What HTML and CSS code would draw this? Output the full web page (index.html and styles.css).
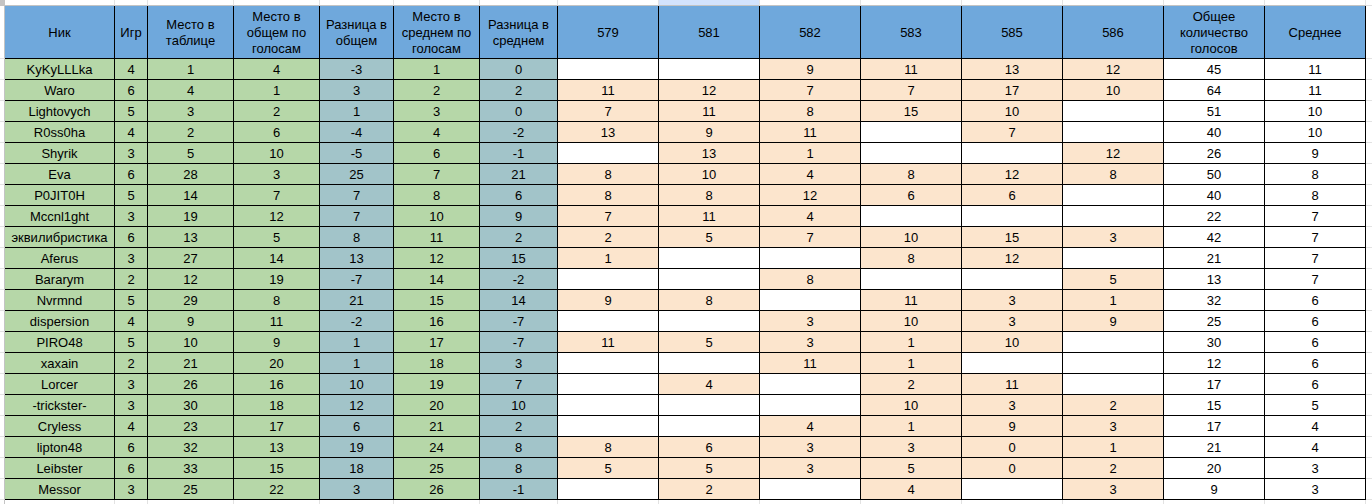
FILE: index.html
```html
<!DOCTYPE html>
<html lang="ru">
<head>
<meta charset="utf-8">
<title>Таблица</title>
<link rel="stylesheet" href="styles.css">
</head>
<body>
<div class="sheet">
  <div class="row top">
    <div class="corner"></div><div></div><div></div><div></div><div></div><div></div><div></div><div></div><div></div><div class="sel"></div><div></div><div></div><div></div><div></div><div></div><div></div><div class="tr"></div>
  </div>
  <div class="row head">
    <div class="gut"></div>
    <div class="cell">Ник</div>
    <div class="cell">Игр</div>
    <div class="cell">Место в<br>таблице</div>
    <div class="cell">Место в<br>общем по<br>голосам</div>
    <div class="cell">Разница в<br>общем</div>
    <div class="cell">Место в<br>среднем по<br>голосам</div>
    <div class="cell">Разница в<br>среднем</div>
    <div class="cell">579</div>
    <div class="cell">581</div>
    <div class="cell">582</div>
    <div class="cell">583</div>
    <div class="cell">585</div>
    <div class="cell">586</div>
    <div class="cell">Общее<br>количество<br>голосов</div>
    <div class="cell">Среднее</div>
    <div class="gutr"></div>
  </div>

  <div class="row"><div class="gut"></div><div class="cell n">KyKyLLLka</div><div class="cell n">4</div><div class="cell n">1</div><div class="cell n">4</div><div class="cell d">-3</div><div class="cell n">1</div><div class="cell d">0</div><div class="cell e"></div><div class="cell e"></div><div class="cell s">9</div><div class="cell s">11</div><div class="cell s">13</div><div class="cell s">12</div><div class="cell e">45</div><div class="cell e">11</div><div class="gutr"></div></div>
  <div class="row"><div class="gut"></div><div class="cell n">Waro</div><div class="cell n">6</div><div class="cell n">4</div><div class="cell n">1</div><div class="cell d">3</div><div class="cell n">2</div><div class="cell d">2</div><div class="cell s">11</div><div class="cell s">12</div><div class="cell s">7</div><div class="cell s">7</div><div class="cell s">17</div><div class="cell s">10</div><div class="cell e">64</div><div class="cell e">11</div><div class="gutr"></div></div>
  <div class="row"><div class="gut"></div><div class="cell n">Lightovych</div><div class="cell n">5</div><div class="cell n">3</div><div class="cell n">2</div><div class="cell d">1</div><div class="cell n">3</div><div class="cell d">0</div><div class="cell s">7</div><div class="cell s">11</div><div class="cell s">8</div><div class="cell s">15</div><div class="cell s">10</div><div class="cell e"></div><div class="cell e">51</div><div class="cell e">10</div><div class="gutr"></div></div>
  <div class="row"><div class="gut"></div><div class="cell n">R0ss0ha</div><div class="cell n">4</div><div class="cell n">2</div><div class="cell n">6</div><div class="cell d">-4</div><div class="cell n">4</div><div class="cell d">-2</div><div class="cell s">13</div><div class="cell s">9</div><div class="cell s">11</div><div class="cell e"></div><div class="cell s">7</div><div class="cell e"></div><div class="cell e">40</div><div class="cell e">10</div><div class="gutr"></div></div>
  <div class="row"><div class="gut"></div><div class="cell n">Shyrik</div><div class="cell n">3</div><div class="cell n">5</div><div class="cell n">10</div><div class="cell d">-5</div><div class="cell n">6</div><div class="cell d">-1</div><div class="cell e"></div><div class="cell s">13</div><div class="cell s">1</div><div class="cell e"></div><div class="cell e"></div><div class="cell s">12</div><div class="cell e">26</div><div class="cell e">9</div><div class="gutr"></div></div>
  <div class="row"><div class="gut"></div><div class="cell n">Eva</div><div class="cell n">6</div><div class="cell n">28</div><div class="cell n">3</div><div class="cell d">25</div><div class="cell n">7</div><div class="cell d">21</div><div class="cell s">8</div><div class="cell s">10</div><div class="cell s">4</div><div class="cell s">8</div><div class="cell s">12</div><div class="cell s">8</div><div class="cell e">50</div><div class="cell e">8</div><div class="gutr"></div></div>
  <div class="row"><div class="gut"></div><div class="cell n">P0JIT0H</div><div class="cell n">5</div><div class="cell n">14</div><div class="cell n">7</div><div class="cell d">7</div><div class="cell n">8</div><div class="cell d">6</div><div class="cell s">8</div><div class="cell s">8</div><div class="cell s">12</div><div class="cell s">6</div><div class="cell s">6</div><div class="cell e"></div><div class="cell e">40</div><div class="cell e">8</div><div class="gutr"></div></div>
  <div class="row"><div class="gut"></div><div class="cell n">Mccnl1ght</div><div class="cell n">3</div><div class="cell n">19</div><div class="cell n">12</div><div class="cell d">7</div><div class="cell n">10</div><div class="cell d">9</div><div class="cell s">7</div><div class="cell s">11</div><div class="cell s">4</div><div class="cell e"></div><div class="cell e"></div><div class="cell e"></div><div class="cell e">22</div><div class="cell e">7</div><div class="gutr"></div></div>
  <div class="row"><div class="gut"></div><div class="cell n">эквилибристика</div><div class="cell n">6</div><div class="cell n">13</div><div class="cell n">5</div><div class="cell d">8</div><div class="cell n">11</div><div class="cell d">2</div><div class="cell s">2</div><div class="cell s">5</div><div class="cell s">7</div><div class="cell s">10</div><div class="cell s">15</div><div class="cell s">3</div><div class="cell e">42</div><div class="cell e">7</div><div class="gutr"></div></div>
  <div class="row"><div class="gut"></div><div class="cell n">Aferus</div><div class="cell n">3</div><div class="cell n">27</div><div class="cell n">14</div><div class="cell d">13</div><div class="cell n">12</div><div class="cell d">15</div><div class="cell s">1</div><div class="cell e"></div><div class="cell e"></div><div class="cell s">8</div><div class="cell s">12</div><div class="cell e"></div><div class="cell e">21</div><div class="cell e">7</div><div class="gutr"></div></div>
  <div class="row"><div class="gut"></div><div class="cell n">Bararym</div><div class="cell n">2</div><div class="cell n">12</div><div class="cell n">19</div><div class="cell d">-7</div><div class="cell n">14</div><div class="cell d">-2</div><div class="cell e"></div><div class="cell e"></div><div class="cell s">8</div><div class="cell e"></div><div class="cell e"></div><div class="cell s">5</div><div class="cell e">13</div><div class="cell e">7</div><div class="gutr"></div></div>
  <div class="row"><div class="gut"></div><div class="cell n">Nvrmnd</div><div class="cell n">5</div><div class="cell n">29</div><div class="cell n">8</div><div class="cell d">21</div><div class="cell n">15</div><div class="cell d">14</div><div class="cell s">9</div><div class="cell s">8</div><div class="cell e"></div><div class="cell s">11</div><div class="cell s">3</div><div class="cell s">1</div><div class="cell e">32</div><div class="cell e">6</div><div class="gutr"></div></div>
  <div class="row"><div class="gut"></div><div class="cell n">dispersion</div><div class="cell n">4</div><div class="cell n">9</div><div class="cell n">11</div><div class="cell d">-2</div><div class="cell n">16</div><div class="cell d">-7</div><div class="cell e"></div><div class="cell e"></div><div class="cell s">3</div><div class="cell s">10</div><div class="cell s">3</div><div class="cell s">9</div><div class="cell e">25</div><div class="cell e">6</div><div class="gutr"></div></div>
  <div class="row"><div class="gut"></div><div class="cell n">PIRO48</div><div class="cell n">5</div><div class="cell n">10</div><div class="cell n">9</div><div class="cell d">1</div><div class="cell n">17</div><div class="cell d">-7</div><div class="cell s">11</div><div class="cell s">5</div><div class="cell s">3</div><div class="cell s">1</div><div class="cell s">10</div><div class="cell e"></div><div class="cell e">30</div><div class="cell e">6</div><div class="gutr"></div></div>
  <div class="row"><div class="gut"></div><div class="cell n">xaxain</div><div class="cell n">2</div><div class="cell n">21</div><div class="cell n">20</div><div class="cell d">1</div><div class="cell n">18</div><div class="cell d">3</div><div class="cell e"></div><div class="cell e"></div><div class="cell s">11</div><div class="cell s">1</div><div class="cell e"></div><div class="cell e"></div><div class="cell e">12</div><div class="cell e">6</div><div class="gutr"></div></div>
  <div class="row"><div class="gut"></div><div class="cell n">Lorcer</div><div class="cell n">3</div><div class="cell n">26</div><div class="cell n">16</div><div class="cell d">10</div><div class="cell n">19</div><div class="cell d">7</div><div class="cell e"></div><div class="cell s">4</div><div class="cell e"></div><div class="cell s">2</div><div class="cell s">11</div><div class="cell e"></div><div class="cell e">17</div><div class="cell e">6</div><div class="gutr"></div></div>
  <div class="row"><div class="gut"></div><div class="cell n">-trickster-</div><div class="cell n">3</div><div class="cell n">30</div><div class="cell n">18</div><div class="cell d">12</div><div class="cell n">20</div><div class="cell d">10</div><div class="cell e"></div><div class="cell e"></div><div class="cell e"></div><div class="cell s">10</div><div class="cell s">3</div><div class="cell s">2</div><div class="cell e">15</div><div class="cell e">5</div><div class="gutr"></div></div>
  <div class="row"><div class="gut"></div><div class="cell n">Cryless</div><div class="cell n">4</div><div class="cell n">23</div><div class="cell n">17</div><div class="cell d">6</div><div class="cell n">21</div><div class="cell d">2</div><div class="cell e"></div><div class="cell e"></div><div class="cell s">4</div><div class="cell s">1</div><div class="cell s">9</div><div class="cell s">3</div><div class="cell e">17</div><div class="cell e">4</div><div class="gutr"></div></div>
  <div class="row"><div class="gut"></div><div class="cell n">lipton48</div><div class="cell n">6</div><div class="cell n">32</div><div class="cell n">13</div><div class="cell d">19</div><div class="cell n">24</div><div class="cell d">8</div><div class="cell s">8</div><div class="cell s">6</div><div class="cell s">3</div><div class="cell s">3</div><div class="cell s">0</div><div class="cell s">1</div><div class="cell e">21</div><div class="cell e">4</div><div class="gutr"></div></div>
  <div class="row"><div class="gut"></div><div class="cell n">Leibster</div><div class="cell n">6</div><div class="cell n">33</div><div class="cell n">15</div><div class="cell d">18</div><div class="cell n">25</div><div class="cell d">8</div><div class="cell s">5</div><div class="cell s">5</div><div class="cell s">3</div><div class="cell s">5</div><div class="cell s">0</div><div class="cell s">2</div><div class="cell e">20</div><div class="cell e">3</div><div class="gutr"></div></div>
  <div class="row"><div class="gut"></div><div class="cell n">Messor</div><div class="cell n">3</div><div class="cell n">25</div><div class="cell n">22</div><div class="cell d">3</div><div class="cell n">26</div><div class="cell d">-1</div><div class="cell e"></div><div class="cell s">2</div><div class="cell e"></div><div class="cell s">4</div><div class="cell e"></div><div class="cell s">3</div><div class="cell e">9</div><div class="cell e">3</div><div class="gutr"></div></div>

  <div class="row bottom">
    <div class="gl"></div><div></div><div></div><div></div><div></div><div></div><div></div><div></div><div></div><div></div><div></div><div></div><div></div><div></div><div></div><div></div><div class="br"></div>
  </div>
</div>
</body>
</html>
```

FILE: styles.css
```css
* {
  box-sizing: border-box;
}

body {
  margin: 0;
  background: #ffffff;
  font-family: "Liberation Sans", Arial, sans-serif;
  font-size: 13px;
  color: #000000;
}

.sheet {
  display: grid;
  grid-template-columns: 5px 110px 33px 86px 86px 74px 86px 78px repeat(8, 101px) 6px;
  grid-template-rows: 6px 53px repeat(21, 21px) 4px;
  width: 1372px;
  height: 504px;
  overflow: hidden;
}

.row {
  display: contents;
}

.cell {
  display: flex;
  align-items: center;
  justify-content: center;
  text-align: center;
  white-space: nowrap;
  overflow: hidden;
  border-right: 1px solid #000000;
  border-bottom: 1px solid #000000;
  padding-top: 1px;
}

.head .cell {
  background: #6fa8dc;
  line-height: 16px;
  white-space: normal;
  padding-top: 2px;
}

.n {
  background: #b6d7a8;
}

.d {
  background: #a2c4c9;
}

.s {
  background: #fce5cd;
}

.e {
  background: #ffffff;
}

.top > div {
  border-right: 1px solid #e2e2e2;
  border-bottom: 1px solid #c4c4c4;
}

.top .corner {
  background: #c4c4c4;
  border-right: 1px solid #c4c4c4;
}

.top .sel {
  background: #d3e3fd;
}

.top .tr {
  border-right: none;
  border-bottom: 1px solid #e2e2e2;
}

.gut {
  border-right: 1px solid #c4c4c4;
  border-bottom: 1px solid #e2e2e2;
}

.gutr {
  border-bottom: 1px solid #e2e2e2;
}

.bottom > div {
  border-right: 1px solid #e2e2e2;
}

.bottom .gl {
  border-right: 1px solid #c4c4c4;
}

.bottom .br {
  border-right: none;
}
```
